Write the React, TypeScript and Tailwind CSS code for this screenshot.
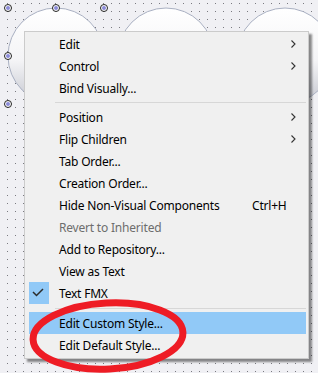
import React from 'react';

type Item = {
  label?: string;
  sep?: boolean;
  h?: string;
  arrow?: boolean;
  shortcut?: string;
  disabled?: boolean;
  checked?: boolean;
  active?: boolean;
};

const items: Item[] = [
  { label: 'Edit', arrow: true },
  { label: 'Control', arrow: true },
  { label: 'Bind Visually...' },
  { sep: true, h: 'h-[7px]' },
  { label: 'Position', arrow: true },
  { label: 'Flip Children', arrow: true },
  { label: 'Tab Order...' },
  { label: 'Creation Order...' },
  { label: 'Hide Non-Visual Components', shortcut: 'Ctrl+H' },
  { label: 'Revert to Inherited', disabled: true },
  { label: 'Add to Repository...' },
  { label: 'View as Text' },
  { label: 'Text FMX', checked: true },
  { sep: true, h: 'h-[8px]' },
  { label: 'Edit Custom Style...', active: true },
  { label: 'Edit Default Style...' },
];

const Handle = ({ x, y }: { x: number; y: number }) => (
  <g>
    <circle cx={x} cy={y} r={3.5} fill="#fff" stroke="#222" strokeWidth={1} />
    <circle cx={x} cy={y} r={2} fill="#8a8ad8" />
  </g>
);

const Canvas = () => (
  <svg className="absolute inset-0" width={318} height={373} viewBox="0 0 318 373">
    <defs>
      <pattern id="dots" x={0} y={0} width={8} height={8} patternUnits="userSpaceOnUse">
        <rect x={7} y={3} width={1} height={1} fill="#7a7a80" />
      </pattern>
      <linearGradient id="shape" x1="0" y1="0" x2="0" y2="1">
        <stop offset="0%" stopColor="#ffffff" />
        <stop offset="55%" stopColor="#f4f4f6" />
        <stop offset="100%" stopColor="#c4c6cf" />
      </linearGradient>
    </defs>
    <rect width={318} height={373} fill="#f0f0f4" />
    <rect width={318} height={373} fill="url(#dots)" />
    <circle cx={56} cy={56} r={48} fill="url(#shape)" stroke="#a9b0c2" strokeWidth={1} />
    <circle cx={166} cy={56} r={48} fill="url(#shape)" stroke="#a9b0c2" strokeWidth={1} />
    <circle cx={285} cy={56} r={48} fill="url(#shape)" stroke="#a9b0c2" strokeWidth={1} />
    <Handle x={8} y={8} />
    <Handle x={56} y={8} />
    <Handle x={104} y={8} />
    <Handle x={8} y={56} />
    <Handle x={8} y={104} />
  </svg>
);

const Chevron = () => (
  <svg width={5} height={8} viewBox="0 0 5 8" className="mr-[10px]">
    <path d="M0.5 0.5 L4 4 L0.5 7.5" fill="none" stroke="#333" strokeWidth={1.1} />
  </svg>
);

const Check = () => (
  <svg width={20} height={22} viewBox="0 0 20 22">
    <path d="M4 10 L7.5 13.5 L14 7" fill="none" stroke="#2b2b2b" strokeWidth={1.5} />
  </svg>
);

export default function App() {
  return (
    <div
      className="relative w-[318px] h-[373px] overflow-hidden text-[12px] tracking-[-0.2px] text-black"
      style={{ fontFamily: '"Noto Sans", "Open Sans", sans-serif' }}
    >
      <Canvas />

      <div className="absolute left-[24px] top-[31px] w-[285px] h-[328px] border border-[#cbcbcb] bg-[#f0f0f0] pt-[1px] pb-[2px] shadow-[3px_3px_2px_rgba(0,0,0,0.45)]">
        {items.map((it, i) =>
          it.sep ? (
            <div key={i} className={`${it.h} flex items-center pl-[30px] pr-[2px]`}>
              <div className="h-px w-full bg-[#d7d7d7]" />
            </div>
          ) : (
            <div
              key={i}
              className={`ml-[4px] mr-[2px] h-[22px] flex items-center ${it.active ? 'bg-[#91c9f7]' : ''}`}
            >
              <div className={`w-[20px] h-full ${it.checked ? 'bg-[#91c9f7]' : ''}`}>
                {it.checked && <Check />}
              </div>
              <span className={`pl-[10px] pt-[1px] flex-1 whitespace-nowrap ${it.disabled ? 'text-[#6d6d6d]' : ''}`}>
                {it.label}
              </span>
              {it.shortcut && <span className="w-[54px] pt-[1px] whitespace-nowrap">{it.shortcut}</span>}
              {it.arrow && <Chevron />}
            </div>
          )
        )}
      </div>

      <svg className="absolute inset-0 pointer-events-none" width={318} height={373} viewBox="0 0 318 373">
        <ellipse
          cx={108}
          cy={336}
          rx={75}
          ry={33}
          transform="rotate(-3 108 336)"
          fill="none"
          stroke="#ee1c25"
          strokeWidth={7}
        />
      </svg>
    </div>
  );
}
